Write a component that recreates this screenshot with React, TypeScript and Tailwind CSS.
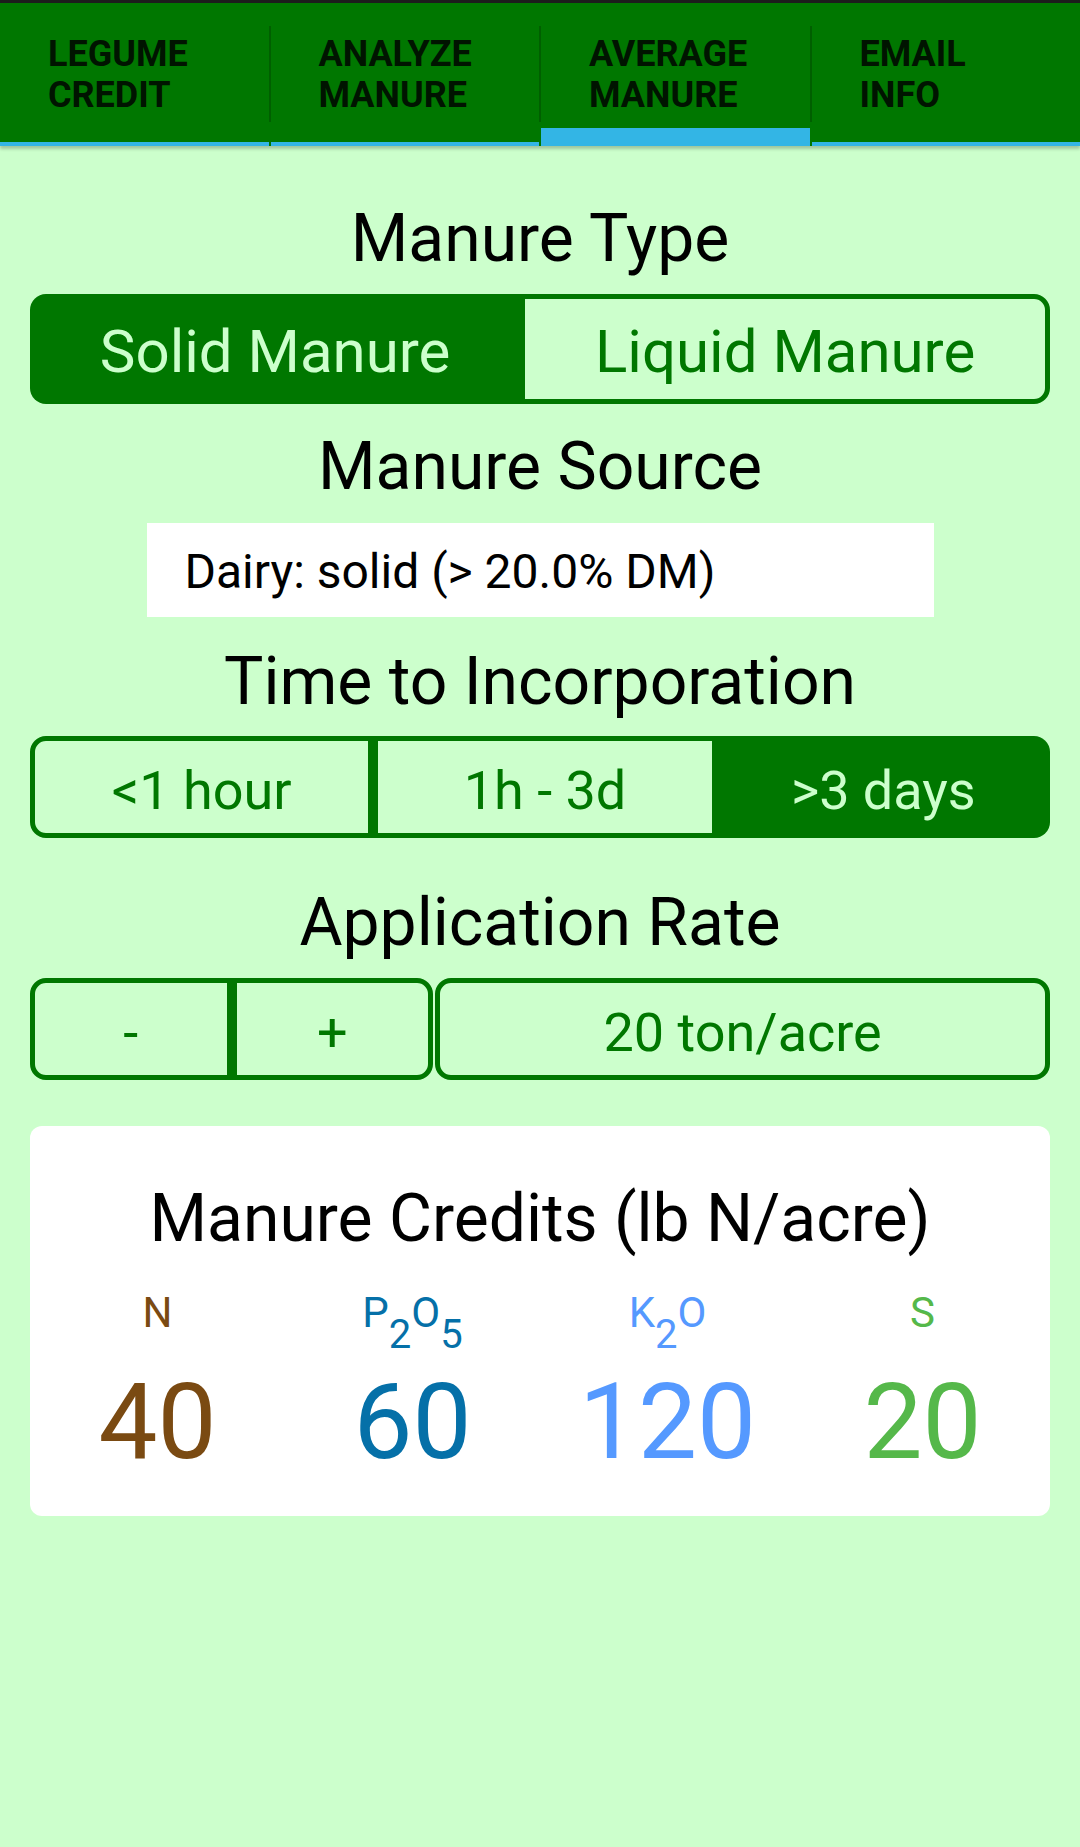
import React from 'react';

const tabs = [
  { top: 'LEGUME', bottom: 'CREDIT' },
  { top: 'ANALYZE', bottom: 'MANURE' },
  { top: 'AVERAGE', bottom: 'MANURE', active: true },
  { top: 'EMAIL', bottom: 'INFO' },
];

function TabBar() {
  return (
    <div className="relative z-10 flex h-[143px] bg-[#007700] shadow-[0_3px_3px_rgba(0,0,0,0.22)]">
      {tabs.map((t, i) => (
        <React.Fragment key={t.top}>
          <div
            className={
              t.active
                ? 'flex-1 border-b-[18px] border-[#33b5e5] pl-[48px] pt-[31px]'
                : 'flex-1 border-b-4 border-[#33b5e5] pl-[48px] pt-[31px]'
            }
          >
            <div className="text-[36px] font-bold leading-[41px] text-[#001400]">
              <div>{t.top}</div>
              <div>{t.bottom}</div>
            </div>
          </div>
          {i < tabs.length - 1 && (
            <div className="w-[2px] shrink-0 pt-[23px]">
              <div className="h-[96px] bg-[#005f00]" />
            </div>
          )}
        </React.Fragment>
      ))}
    </div>
  );
}

function Heading({ children, className = '' }: { children: React.ReactNode; className?: string }) {
  return <h2 className={`text-center text-[66px] leading-[77px] text-black ${className}`}>{children}</h2>;
}

function Sub({ children }: { children: React.ReactNode }) {
  return <span className="align-[-21px] text-[40px] leading-none">{children}</span>;
}

export default function App() {
  return (
    <div className="min-h-[1847px] bg-[#ccffcc] [font-family:Roboto,sans-serif]">
      <div className="h-[3px] bg-[#1c1c1c]" />
      <TabBar />

      <div className="flex flex-col px-[30px] pt-[54px]">
        <Heading>Manure Type</Heading>
        <div className="mt-[17px] flex h-[110px] text-[60px]">
          <div className="flex flex-auto items-center justify-center rounded-l-[16px] bg-[#007700] pt-[6px] text-[#ccffcc]">
            Solid Manure
          </div>
          <div className="flex flex-auto items-center justify-center rounded-r-[16px] border-[5px] border-[#007700] bg-[#ccffcc] pt-[6px] text-[#007700]">
            Liquid Manure
          </div>
        </div>

        <Heading className="mt-[24px]">Manure Source</Heading>
        <div className="mx-auto mt-[18px] flex h-[94px] w-[787px] items-center bg-white pl-[38px] pt-[3px] text-[48px] text-black">
          Dairy: solid (&gt; 20.0% DM)
        </div>

        <Heading className="mt-[26px]">Time to Incorporation</Heading>
        <div className="mt-[16px] flex h-[102px] text-[54px]">
          <div className="flex flex-1 items-center justify-center rounded-l-[16px] border-[5px] border-[#007700] bg-[#ccffcc] pt-[7px] text-[#007700]">
            &lt;1 hour
          </div>
          <div className="flex flex-1 items-center justify-center border-[5px] border-[#007700] bg-[#ccffcc] pt-[7px] text-[#007700]">
            1h - 3d
          </div>
          <div className="flex flex-1 items-center justify-center rounded-r-[16px] bg-[#007700] pt-[7px] text-[#ccffcc]">
            &gt;3 days
          </div>
        </div>

        <Heading className="mt-[46px]">Application Rate</Heading>
        <div className="mt-[17px] flex h-[102px] gap-[2px] text-[54px] text-[#007700]">
          <div className="flex flex-[2]">
            <div className="flex flex-1 items-center justify-center rounded-l-[16px] border-[5px] border-[#007700] bg-[#ccffcc] pt-[7px]">
              -
            </div>
            <div className="flex flex-1 items-center justify-center rounded-r-[16px] border-[5px] border-[#007700] bg-[#ccffcc] pt-[7px]">
              +
            </div>
          </div>
          <div className="flex flex-[3] items-center justify-center rounded-[16px] border-[5px] border-[#007700] bg-[#ccffcc] pt-[7px]">
            20 ton/acre
          </div>
        </div>

        <div className="mt-[46px] h-[390px] rounded-[12px] bg-white pt-[54px]">
          <Heading>Manure Credits (lb N/acre)</Heading>
          <div className="mt-[31px] grid h-[49px] grid-cols-4 text-center text-[42px] leading-[49px]">
            <div className="text-[#7a4a12]">N</div>
            <div className="text-[#0570a8]">
              P<Sub>2</Sub>O<Sub>5</Sub>
            </div>
            <div className="text-[#5599ff]">
              K<Sub>2</Sub>O
            </div>
            <div className="text-[#55b84a]">S</div>
          </div>
          <div className="mt-[33px] grid grid-cols-4 text-center text-[105px] leading-none">
            <div className="text-[#7a4a12]">40</div>
            <div className="text-[#0570a8]">60</div>
            <div className="text-[#5599ff]">120</div>
            <div className="text-[#55b84a]">20</div>
          </div>
        </div>
      </div>
    </div>
  );
}
